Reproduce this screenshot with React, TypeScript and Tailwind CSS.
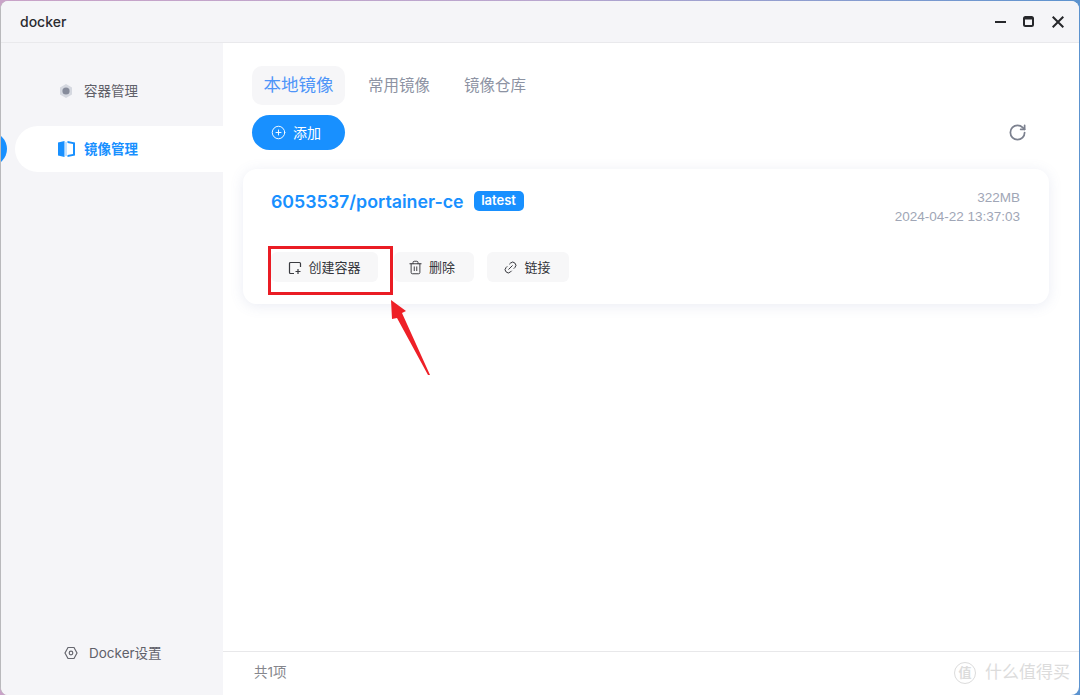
import { RotateCw, Trash2, Link2, CirclePlus } from "lucide-react";

const font = "font-['Inter','Liberation_Sans','Noto_Sans_CJK_SC',sans-serif]";

const ActionButton = ({ icon, label, className }: { icon: React.ReactNode; label: string; className: string }) => (
  <button className={`h-[30px] pt-px flex items-center justify-center gap-[6px] rounded-md bg-[#f7f7f8] text-[13px] text-[#33343a] ${className}`}>
    {icon}
    <span>{label}</span>
  </button>
);

export default function App() {
  return (
    <div className={`relative w-[1080px] h-[695px] overflow-hidden bg-gradient-to-r from-[#c9a3c8] via-[#b9a6cf] to-[#5c93cf] ${font}`}>
      <div className="w-[1079px] h-[694px] mt-px rounded-lg bg-white overflow-hidden flex flex-col border-l border-[#b9b9bc]">
        {/* title bar */}
        <div className="h-[42px] shrink-0 bg-[#f5f5f8] border-b border-[#e9e9ec] flex items-center pl-[19px] pr-[15px]">
          <span className="text-[14px] font-medium text-[#2b2b30]">docker</span>
          <div className="ml-auto flex items-center text-[#26272b]">
            <svg width="11" height="12" viewBox="0 0 11 12">
              <rect x="0" y="5" width="11" height="2" fill="currentColor" />
            </svg>
            <svg className="ml-[17px]" width="11" height="11" viewBox="0 0 11 11" fill="none">
              <rect x="1" y="1" width="9" height="9" rx="1.500" stroke="currentColor" strokeWidth="2" />
              <rect x="1" y="1" width="9" height="2.500" fill="currentColor" />
            </svg>
            <svg className="ml-[18px]" width="12" height="12" viewBox="0 0 12 12" stroke="currentColor" strokeWidth="2">
              <path d="M.7.7l10.600 10.600M11.300.7.7 11.300" />
            </svg>
          </div>
        </div>

        <div className="flex-1 flex min-h-0">
          {/* sidebar */}
          <div className="w-[222px] shrink-0 bg-[#f5f5f8] flex flex-col pt-[25px] pb-[32px]">
            <div className="h-[46px] flex items-center pl-[57px] gap-[10px] text-[13.500px] text-[#5f6069]">
              <svg width="16" height="16" viewBox="0 0 16 16">
                <path d="M8 1 14 4.500v7L8 15l-6-3.500v-7z" fill="#d5d8e0" />
                <circle cx="8" cy="8" r="3.600" fill="#868b9b" />
              </svg>
              <span>容器管理</span>
            </div>
            <div className="relative mt-[12px]">
              <div className="absolute -left-[28px] top-[6px] w-[34px] h-[34px] rounded-full bg-[#1890ff]" />
              <div className="ml-[14px] h-[46px] rounded-l-[23px] bg-white flex items-center pl-[43px] gap-[9px] text-[13.500px] font-semibold text-[#1890ff]">
                <svg width="17" height="16" viewBox="0 0 17 16" fill="#1890ff">
                  <path d="M0 1.500 6.500 0v16L0 14.500z" />
                  <rect x="7.500" y="1" width="1" height="14" fill="#8cc6ff" />
                  <path d="M9.500 0 17 1.500v13L9.500 16v-2l5.500-1V3L9.500 2z" />
                </svg>
                <span>镜像管理</span>
              </div>
            </div>
            <div className="mt-auto flex items-center pl-[63px] gap-[11px] text-[13.500px] text-[#5f6069]">
              <svg width="14" height="14" viewBox="0 0 14 14" fill="none" stroke="#66676f" strokeWidth="1.200">
                <path d="M4 1.500h6L13 7l-3 5.500H4L1 7z" />
                <circle cx="7" cy="7" r="1.800" />
              </svg>
              <span>Docker设置</span>
            </div>
          </div>

          {/* main */}
          <div className="flex-1 min-w-0 flex flex-col">
            <div className="flex-1 pl-[20px] pr-[30px] pt-[23px] flex flex-col">
              <div className="ml-[9px] flex items-center">
                <div className="h-[39px] w-[93px] rounded-[10px] bg-[#f6f6f8] flex items-center justify-center text-[17.500px] text-[#4e95f8]">本地镜像</div>
                <span className="ml-[23px] text-[15.500px] text-[#8d93a3]">常用镜像</span>
                <span className="ml-[34px] text-[15.500px] text-[#8d93a3]">镜像仓库</span>
              </div>

              <div className="mt-[10px] ml-[9px] pr-[22px] flex items-center justify-between">
                <button className="w-[93px] h-[35px] rounded-full bg-[#1890ff] text-white text-[14px] pr-[5px] flex items-center justify-center gap-[7px]">
                  <CirclePlus size={15} strokeWidth={1.500} />
                  <span>添加</span>
                </button>
                <RotateCw size={19} strokeWidth={2.200} className="text-[#7c818f]" />
              </div>

              <div className="mt-[19px] w-[806px] h-[135px] rounded-[14px] bg-white shadow-[0_2px_14px_rgba(90,110,170,0.13)] pl-[28px] pr-[29px] pt-[19px] flex flex-col">
                <div className="flex items-start justify-between">
                  <div className="flex items-center gap-[10px] pt-[3px]">
                    <span className="text-[17.800px] leading-[22px] font-semibold text-[#1890ff]">6053537/portainer-ce</span>
                    <span className="h-[20px] w-[50px] rounded-[5px] bg-[#1890ff] text-white text-[13px] font-semibold flex items-center justify-center -mt-[2px]">latest</span>
                  </div>
                  <div className="text-right text-[13.500px] leading-[19px] text-[#a0a6b6] font-['Liberation_Sans',sans-serif]">
                    <div>322MB</div>
                    <div>2024-04-22 13:37:03</div>
                  </div>
                </div>
                <div className="mt-[26px] flex">
                  <ActionButton
                    className="w-[107px]"
                    label="创建容器"
                    icon={
                      <svg width="14" height="14" viewBox="0 0 14 14" fill="none" stroke="#3a3b40" strokeWidth="1.200">
                        <path d="M6 12.500H2.500a1 1 0 0 1-1-1v-9a1 1 0 0 1 1-1h9a1 1 0 0 1 1 1V6M10 8v5M7.500 10.500h5" />
                      </svg>
                    }
                  />
                  <ActionButton className="w-[80px] ml-[16px] pr-[5px]" label="删除" icon={<Trash2 size={15} strokeWidth={1.500} />} />
                  <ActionButton className="w-[82px] ml-[13px] pr-[2px]" label="链接" icon={<Link2 size={15} strokeWidth={1.500} className="-rotate-45" />} />
                </div>
              </div>
            </div>

            <div className="h-[44px] shrink-0 border-t border-[#e8e8ea] pl-[31px] pr-[9px] flex items-center justify-between">
              <span className="text-[13.500px] text-[#85868c] -mt-[2px]">共1项</span>
              <div className="flex items-center gap-[9px] text-[#dcdcdc] -mt-[2px]">
                <span className="w-[22px] h-[22px] rounded-full border border-[#dcdcdc] flex items-center justify-center text-[13px] font-semibold">值</span>
                <span className="text-[17px]">什么值得买</span>
              </div>
            </div>
          </div>
        </div>
      </div>

      {/* annotation */}
      <div className="absolute left-[268px] top-[246px] w-[125px] h-[49px] border-[3px] border-[#ea1c24]" />
      <svg className="absolute left-[380px] top-[295px]" width="60" height="90" viewBox="0 0 60 90">
        <path d="M11 5 26 16 22 18 50 80 48 80 17 23 12 24z" fill="#ee2027" />
      </svg>
    </div>
  );
}
